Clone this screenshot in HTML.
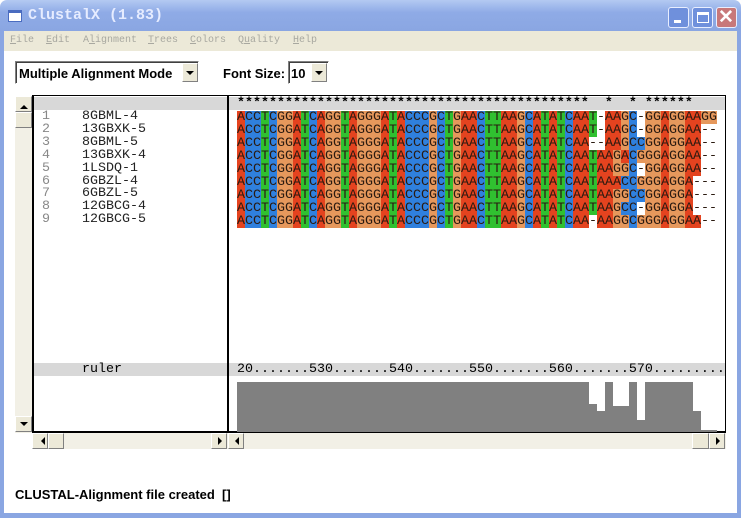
<!DOCTYPE html>
<html><head><meta charset="utf-8">
<style>
*{margin:0;padding:0;box-sizing:border-box}
body{width:741px;height:518px;position:relative;overflow:hidden;background:#fff;font-family:"Liberation Sans",sans-serif}
.abs{position:absolute}
.mono{font-family:"Liberation Mono",monospace;font-size:13.33px}
.row{position:absolute;left:237px;height:13px;line-height:13px;white-space:nowrap;font-family:"Liberation Mono",monospace;font-size:13.33px;color:#2a1a10}
.row i{font-style:normal;display:inline-block;width:8px;height:13px;text-align:center;overflow:hidden}
.a{background:#e4431f}.c{background:#2f80de}.g{background:#e6985c}.t{background:#30c030}
.btn{position:absolute;background:#ece9d8;border:1px solid;border-color:#fff #808080 #808080 #fff}
.tri{position:absolute;width:0;height:0}
.sb{background:#f2f0e6}
.tbb{position:absolute;top:7px;width:21px;height:21px;border:1px solid #e8eeff;border-radius:3px;background:#6f90dc}
.mi{position:absolute;top:35px;font-family:"Liberation Mono",monospace;font-size:10px;color:#a8a8a0}
</style></head><body>
<div class="abs" style="left:0;top:0;width:741px;height:31px;background:linear-gradient(#b3c9f2,#8fabe6 40%,#8aa6e2);border-radius:7px 7px 0 0"></div>
<div class="abs" style="left:8px;top:10px;width:14px;height:12px;background:#fff;border:1px solid #4a6cc0;border-top:3px solid #4a6cc0"></div>
<div class="abs" style="left:28px;top:7px;font-family:'Liberation Mono',monospace;font-weight:bold;font-size:15px;color:#e6ecff">ClustalX (1.83)</div>
<div class="tbb" style="left:668px"><div class="abs" style="left:5px;top:12px;width:7px;height:3px;background:#fff"></div></div>
<div class="tbb" style="left:692px"><div class="abs" style="left:4px;top:4px;width:12px;height:11px;border:1px solid #fff;border-top:3px solid #fff"></div></div>
<div class="tbb" style="left:716px;background:#c8787a"><div class="abs" style="left:1px;top:-2px;color:#fff;font-size:19px;font-weight:bold">✕</div></div>
<div class="abs" style="left:0;top:31px;width:4px;height:487px;background:#8aa6e2"></div>
<div class="abs" style="left:737px;top:31px;width:4px;height:487px;background:#8aa6e2"></div>
<div class="abs" style="left:0;top:513px;width:741px;height:5px;background:#8aa6e2"></div>
<div class="abs" style="left:4px;top:31px;width:733px;height:20px;background:#ece9d8"></div>
<div class="mi" style="left:10px"><u>F</u>ile</div>
<div class="mi" style="left:46px"><u>E</u>dit</div>
<div class="mi" style="left:83px">A<u>l</u>ignment</div>
<div class="mi" style="left:148px"><u>T</u>rees</div>
<div class="mi" style="left:190px"><u>C</u>olors</div>
<div class="mi" style="left:238px">Q<u>u</u>ality</div>
<div class="mi" style="left:293px"><u>H</u>elp</div>
<div class="abs" style="left:15px;top:61px;width:184px;height:23px;border:1px solid;border-color:#808080 #fff #fff #808080;box-shadow:inset 1px 1px 0 #404040"></div>
<div class="abs" style="left:19px;top:66px;font-weight:bold;font-size:13px">Multiple Alignment Mode</div>
<div class="btn" style="left:182px;top:63px;width:16px;height:19px"><div class="tri" style="left:3px;top:7px;border:4px solid transparent;border-top:4px solid #000"></div></div>
<div class="abs" style="left:223px;top:66px;font-weight:bold;font-size:13px">Font Size:</div>
<div class="abs" style="left:288px;top:61px;width:41px;height:23px;border:1px solid;border-color:#808080 #fff #fff #808080;box-shadow:inset 1px 1px 0 #404040"></div>
<div class="abs" style="left:291px;top:66px;font-weight:bold;font-size:13px">10</div>
<div class="btn" style="left:311px;top:63px;width:16px;height:19px"><div class="tri" style="left:3px;top:7px;border:4px solid transparent;border-top:4px solid #000"></div></div>
<div class="abs sb" style="left:15px;top:96px;width:17px;height:337px"></div>
<div class="btn" style="left:15px;top:96px;width:17px;height:16px"><div class="tri" style="left:4px;top:4px;border:4px solid transparent;border-bottom:4px solid #000"></div></div>
<div class="btn" style="left:15px;top:112px;width:17px;height:16px"></div>
<div class="btn" style="left:15px;top:416px;width:17px;height:16px"><div class="tri" style="left:4px;top:5px;border:4px solid transparent;border-top:4px solid #000"></div></div>
<div class="abs" style="left:32px;top:95px;width:694px;height:338px;border:1px solid #000;border-left-width:2px;border-bottom-width:2px"></div>
<div class="abs" style="left:227px;top:95px;width:2px;height:338px;background:#000"></div>
<div class="abs" style="left:34px;top:97px;width:193px;height:13px;background:#d8d8d8"></div>
<div class="abs" style="left:229px;top:97px;width:496px;height:13px;background:#d8d8d8"></div>
<div class="abs mono" style="left:237px;top:97px;line-height:13px;white-space:pre;font-weight:bold">********************************************  *  * ******</div>
<div class="abs mono" style="left:42px;top:111px;line-height:12.9px;white-space:pre;color:#222"><span style="color:#888">1</span>    8GBML-4
<span style="color:#888">2</span>    13GBXK-5
<span style="color:#888">3</span>    8GBML-5
<span style="color:#888">4</span>    13GBXK-4
<span style="color:#888">5</span>    1LSDQ-1
<span style="color:#888">6</span>    6GBZL-4
<span style="color:#888">7</span>    6GBZL-5
<span style="color:#888">8</span>    12GBCG-4
<span style="color:#888">9</span>    12GBCG-5</div>
<div class="abs" style="left:34px;top:363px;width:193px;height:13px;background:#d8d8d8"></div>
<div class="abs" style="left:229px;top:363px;width:496px;height:13px;background:#d8d8d8"></div>
<div class="abs mono" style="left:82px;top:363px;line-height:13px">ruler</div>
<div class="abs mono" style="left:237px;top:363px;line-height:13px;white-space:pre;width:488px;overflow:hidden">20.......530.......540.......550.......560.......570.........</div>
<div class="abs" style="left:237px;top:382px;width:352px;height:50px;background:#808080"></div>
<div class="abs" style="left:589px;top:404px;width:8px;height:28px;background:#808080"></div>
<div class="abs" style="left:597px;top:411px;width:8px;height:21px;background:#808080"></div>
<div class="abs" style="left:605px;top:382px;width:8px;height:50px;background:#808080"></div>
<div class="abs" style="left:613px;top:406px;width:16px;height:26px;background:#808080"></div>
<div class="abs" style="left:629px;top:382px;width:8px;height:50px;background:#808080"></div>
<div class="abs" style="left:637px;top:420px;width:8px;height:12px;background:#808080"></div>
<div class="abs" style="left:645px;top:382px;width:48px;height:50px;background:#808080"></div>
<div class="abs" style="left:693px;top:411px;width:8px;height:21px;background:#808080"></div>
<div class="abs" style="left:701px;top:430px;width:16px;height:2px;background:#808080"></div>
<div class="abs sb" style="left:32px;top:433px;width:694px;height:16px"></div>
<div class="btn" style="left:32px;top:433px;width:16px;height:16px"><div class="tri" style="left:4px;top:3px;border:4px solid transparent;border-right:4px solid #000"></div></div>
<div class="btn" style="left:48px;top:433px;width:16px;height:16px"></div>
<div class="btn" style="left:211px;top:433px;width:16px;height:16px"><div class="tri" style="left:6px;top:3px;border:4px solid transparent;border-left:4px solid #000"></div></div>
<div class="btn" style="left:228px;top:433px;width:16px;height:16px"><div class="tri" style="left:2px;top:3px;border:4px solid transparent;border-right:4px solid #000"></div></div>
<div class="btn" style="left:692px;top:433px;width:17px;height:16px"></div>
<div class="btn" style="left:709px;top:433px;width:16px;height:16px"><div class="tri" style="left:6px;top:3px;border:4px solid transparent;border-left:4px solid #000"></div></div>
<div class="abs" style="left:15px;top:487px;font-weight:bold;font-size:13px;white-space:pre">CLUSTAL-Alignment file created  []</div>
<div class="row" style="top:111px"><i class=a>A</i><i class=c>C</i><i class=c>C</i><i class=t>T</i><i class=c>C</i><i class=g>G</i><i class=g>G</i><i class=a>A</i><i class=t>T</i><i class=c>C</i><i class=a>A</i><i class=g>G</i><i class=g>G</i><i class=t>T</i><i class=a>A</i><i class=g>G</i><i class=g>G</i><i class=g>G</i><i class=a>A</i><i class=t>T</i><i class=a>A</i><i class=c>C</i><i class=c>C</i><i class=c>C</i><i class=g>G</i><i class=c>C</i><i class=t>T</i><i class=g>G</i><i class=a>A</i><i class=a>A</i><i class=c>C</i><i class=t>T</i><i class=t>T</i><i class=a>A</i><i class=a>A</i><i class=g>G</i><i class=c>C</i><i class=a>A</i><i class=t>T</i><i class=a>A</i><i class=t>T</i><i class=c>C</i><i class=a>A</i><i class=a>A</i><i class=t>T</i><i>-</i><i class=a>A</i><i class=a>A</i><i class=g>G</i><i class=c>C</i><i>-</i><i class=g>G</i><i class=g>G</i><i class=a>A</i><i class=g>G</i><i class=g>G</i><i class=a>A</i><i class=a>A</i><i class=g>G</i><i class=g>G</i></div>
<div class="row" style="top:124px"><i class=a>A</i><i class=c>C</i><i class=c>C</i><i class=t>T</i><i class=c>C</i><i class=g>G</i><i class=g>G</i><i class=a>A</i><i class=t>T</i><i class=c>C</i><i class=a>A</i><i class=g>G</i><i class=g>G</i><i class=t>T</i><i class=a>A</i><i class=g>G</i><i class=g>G</i><i class=g>G</i><i class=a>A</i><i class=t>T</i><i class=a>A</i><i class=c>C</i><i class=c>C</i><i class=c>C</i><i class=g>G</i><i class=c>C</i><i class=t>T</i><i class=g>G</i><i class=a>A</i><i class=a>A</i><i class=c>C</i><i class=t>T</i><i class=t>T</i><i class=a>A</i><i class=a>A</i><i class=g>G</i><i class=c>C</i><i class=a>A</i><i class=t>T</i><i class=a>A</i><i class=t>T</i><i class=c>C</i><i class=a>A</i><i class=a>A</i><i class=t>T</i><i>-</i><i class=a>A</i><i class=a>A</i><i class=g>G</i><i class=c>C</i><i>-</i><i class=g>G</i><i class=g>G</i><i class=a>A</i><i class=g>G</i><i class=g>G</i><i class=a>A</i><i class=a>A</i><i>-</i><i>-</i></div>
<div class="row" style="top:137px"><i class=a>A</i><i class=c>C</i><i class=c>C</i><i class=t>T</i><i class=c>C</i><i class=g>G</i><i class=g>G</i><i class=a>A</i><i class=t>T</i><i class=c>C</i><i class=a>A</i><i class=g>G</i><i class=g>G</i><i class=t>T</i><i class=a>A</i><i class=g>G</i><i class=g>G</i><i class=g>G</i><i class=a>A</i><i class=t>T</i><i class=a>A</i><i class=c>C</i><i class=c>C</i><i class=c>C</i><i class=g>G</i><i class=c>C</i><i class=t>T</i><i class=g>G</i><i class=a>A</i><i class=a>A</i><i class=c>C</i><i class=t>T</i><i class=t>T</i><i class=a>A</i><i class=a>A</i><i class=g>G</i><i class=c>C</i><i class=a>A</i><i class=t>T</i><i class=a>A</i><i class=t>T</i><i class=c>C</i><i class=a>A</i><i class=a>A</i><i>-</i><i>-</i><i class=a>A</i><i class=a>A</i><i class=g>G</i><i class=c>C</i><i class=c>C</i><i class=g>G</i><i class=g>G</i><i class=a>A</i><i class=g>G</i><i class=g>G</i><i class=a>A</i><i class=a>A</i><i>-</i><i>-</i></div>
<div class="row" style="top:150px"><i class=a>A</i><i class=c>C</i><i class=c>C</i><i class=t>T</i><i class=c>C</i><i class=g>G</i><i class=g>G</i><i class=a>A</i><i class=t>T</i><i class=c>C</i><i class=a>A</i><i class=g>G</i><i class=g>G</i><i class=t>T</i><i class=a>A</i><i class=g>G</i><i class=g>G</i><i class=g>G</i><i class=a>A</i><i class=t>T</i><i class=a>A</i><i class=c>C</i><i class=c>C</i><i class=c>C</i><i class=g>G</i><i class=c>C</i><i class=t>T</i><i class=g>G</i><i class=a>A</i><i class=a>A</i><i class=c>C</i><i class=t>T</i><i class=t>T</i><i class=a>A</i><i class=a>A</i><i class=g>G</i><i class=c>C</i><i class=a>A</i><i class=t>T</i><i class=a>A</i><i class=t>T</i><i class=c>C</i><i class=a>A</i><i class=a>A</i><i class=t>T</i><i class=a>A</i><i class=a>A</i><i class=g>G</i><i class=a>A</i><i class=c>C</i><i class=g>G</i><i class=g>G</i><i class=g>G</i><i class=a>A</i><i class=g>G</i><i class=g>G</i><i class=a>A</i><i class=a>A</i><i>-</i><i>-</i></div>
<div class="row" style="top:163px"><i class=a>A</i><i class=c>C</i><i class=c>C</i><i class=t>T</i><i class=c>C</i><i class=g>G</i><i class=g>G</i><i class=a>A</i><i class=t>T</i><i class=c>C</i><i class=a>A</i><i class=g>G</i><i class=g>G</i><i class=t>T</i><i class=a>A</i><i class=g>G</i><i class=g>G</i><i class=g>G</i><i class=a>A</i><i class=t>T</i><i class=a>A</i><i class=c>C</i><i class=c>C</i><i class=c>C</i><i class=g>G</i><i class=c>C</i><i class=t>T</i><i class=g>G</i><i class=a>A</i><i class=a>A</i><i class=c>C</i><i class=t>T</i><i class=t>T</i><i class=a>A</i><i class=a>A</i><i class=g>G</i><i class=c>C</i><i class=a>A</i><i class=t>T</i><i class=a>A</i><i class=t>T</i><i class=c>C</i><i class=a>A</i><i class=a>A</i><i class=t>T</i><i class=a>A</i><i class=a>A</i><i class=g>G</i><i class=g>G</i><i class=c>C</i><i>-</i><i class=g>G</i><i class=g>G</i><i class=a>A</i><i class=g>G</i><i class=g>G</i><i class=a>A</i><i class=a>A</i><i>-</i><i>-</i></div>
<div class="row" style="top:176px"><i class=a>A</i><i class=c>C</i><i class=c>C</i><i class=t>T</i><i class=c>C</i><i class=g>G</i><i class=g>G</i><i class=a>A</i><i class=t>T</i><i class=c>C</i><i class=a>A</i><i class=g>G</i><i class=g>G</i><i class=t>T</i><i class=a>A</i><i class=g>G</i><i class=g>G</i><i class=g>G</i><i class=a>A</i><i class=t>T</i><i class=a>A</i><i class=c>C</i><i class=c>C</i><i class=c>C</i><i class=g>G</i><i class=c>C</i><i class=t>T</i><i class=g>G</i><i class=a>A</i><i class=a>A</i><i class=c>C</i><i class=t>T</i><i class=t>T</i><i class=a>A</i><i class=a>A</i><i class=g>G</i><i class=c>C</i><i class=a>A</i><i class=t>T</i><i class=a>A</i><i class=t>T</i><i class=c>C</i><i class=a>A</i><i class=a>A</i><i class=t>T</i><i class=a>A</i><i class=a>A</i><i class=a>A</i><i class=c>C</i><i class=c>C</i><i class=g>G</i><i class=g>G</i><i class=g>G</i><i class=a>A</i><i class=g>G</i><i class=g>G</i><i class=a>A</i><i>-</i><i>-</i><i>-</i></div>
<div class="row" style="top:189px"><i class=a>A</i><i class=c>C</i><i class=c>C</i><i class=t>T</i><i class=c>C</i><i class=g>G</i><i class=g>G</i><i class=a>A</i><i class=t>T</i><i class=c>C</i><i class=a>A</i><i class=g>G</i><i class=g>G</i><i class=t>T</i><i class=a>A</i><i class=g>G</i><i class=g>G</i><i class=g>G</i><i class=a>A</i><i class=t>T</i><i class=a>A</i><i class=c>C</i><i class=c>C</i><i class=c>C</i><i class=g>G</i><i class=c>C</i><i class=t>T</i><i class=g>G</i><i class=a>A</i><i class=a>A</i><i class=c>C</i><i class=t>T</i><i class=t>T</i><i class=a>A</i><i class=a>A</i><i class=g>G</i><i class=c>C</i><i class=a>A</i><i class=t>T</i><i class=a>A</i><i class=t>T</i><i class=c>C</i><i class=a>A</i><i class=a>A</i><i class=t>T</i><i class=a>A</i><i class=a>A</i><i class=g>G</i><i class=g>G</i><i class=c>C</i><i class=c>C</i><i class=g>G</i><i class=g>G</i><i class=a>A</i><i class=g>G</i><i class=g>G</i><i class=a>A</i><i>-</i><i>-</i><i>-</i></div>
<div class="row" style="top:202px"><i class=a>A</i><i class=c>C</i><i class=c>C</i><i class=t>T</i><i class=c>C</i><i class=g>G</i><i class=g>G</i><i class=a>A</i><i class=t>T</i><i class=c>C</i><i class=a>A</i><i class=g>G</i><i class=g>G</i><i class=t>T</i><i class=a>A</i><i class=g>G</i><i class=g>G</i><i class=g>G</i><i class=a>A</i><i class=t>T</i><i class=a>A</i><i class=c>C</i><i class=c>C</i><i class=c>C</i><i class=g>G</i><i class=c>C</i><i class=t>T</i><i class=g>G</i><i class=a>A</i><i class=a>A</i><i class=c>C</i><i class=t>T</i><i class=t>T</i><i class=a>A</i><i class=a>A</i><i class=g>G</i><i class=c>C</i><i class=a>A</i><i class=t>T</i><i class=a>A</i><i class=t>T</i><i class=c>C</i><i class=a>A</i><i class=a>A</i><i class=t>T</i><i class=a>A</i><i class=a>A</i><i class=g>G</i><i class=c>C</i><i class=c>C</i><i>-</i><i class=g>G</i><i class=g>G</i><i class=a>A</i><i class=g>G</i><i class=g>G</i><i class=a>A</i><i>-</i><i>-</i><i>-</i></div>
<div class="row" style="top:215px"><i class=a>A</i><i class=c>C</i><i class=c>C</i><i class=t>T</i><i class=c>C</i><i class=g>G</i><i class=g>G</i><i class=a>A</i><i class=t>T</i><i class=c>C</i><i class=a>A</i><i class=g>G</i><i class=g>G</i><i class=t>T</i><i class=a>A</i><i class=g>G</i><i class=g>G</i><i class=g>G</i><i class=a>A</i><i class=t>T</i><i class=a>A</i><i class=c>C</i><i class=c>C</i><i class=c>C</i><i class=g>G</i><i class=c>C</i><i class=t>T</i><i class=g>G</i><i class=a>A</i><i class=a>A</i><i class=c>C</i><i class=t>T</i><i class=t>T</i><i class=a>A</i><i class=a>A</i><i class=g>G</i><i class=c>C</i><i class=a>A</i><i class=t>T</i><i class=a>A</i><i class=t>T</i><i class=c>C</i><i class=a>A</i><i class=a>A</i><i>-</i><i class=a>A</i><i class=a>A</i><i class=g>G</i><i class=g>G</i><i class=c>C</i><i class=g>G</i><i class=g>G</i><i class=g>G</i><i class=a>A</i><i class=g>G</i><i class=g>G</i><i class=a>A</i><i class=a>A</i><i>-</i><i>-</i></div>
</body></html>
